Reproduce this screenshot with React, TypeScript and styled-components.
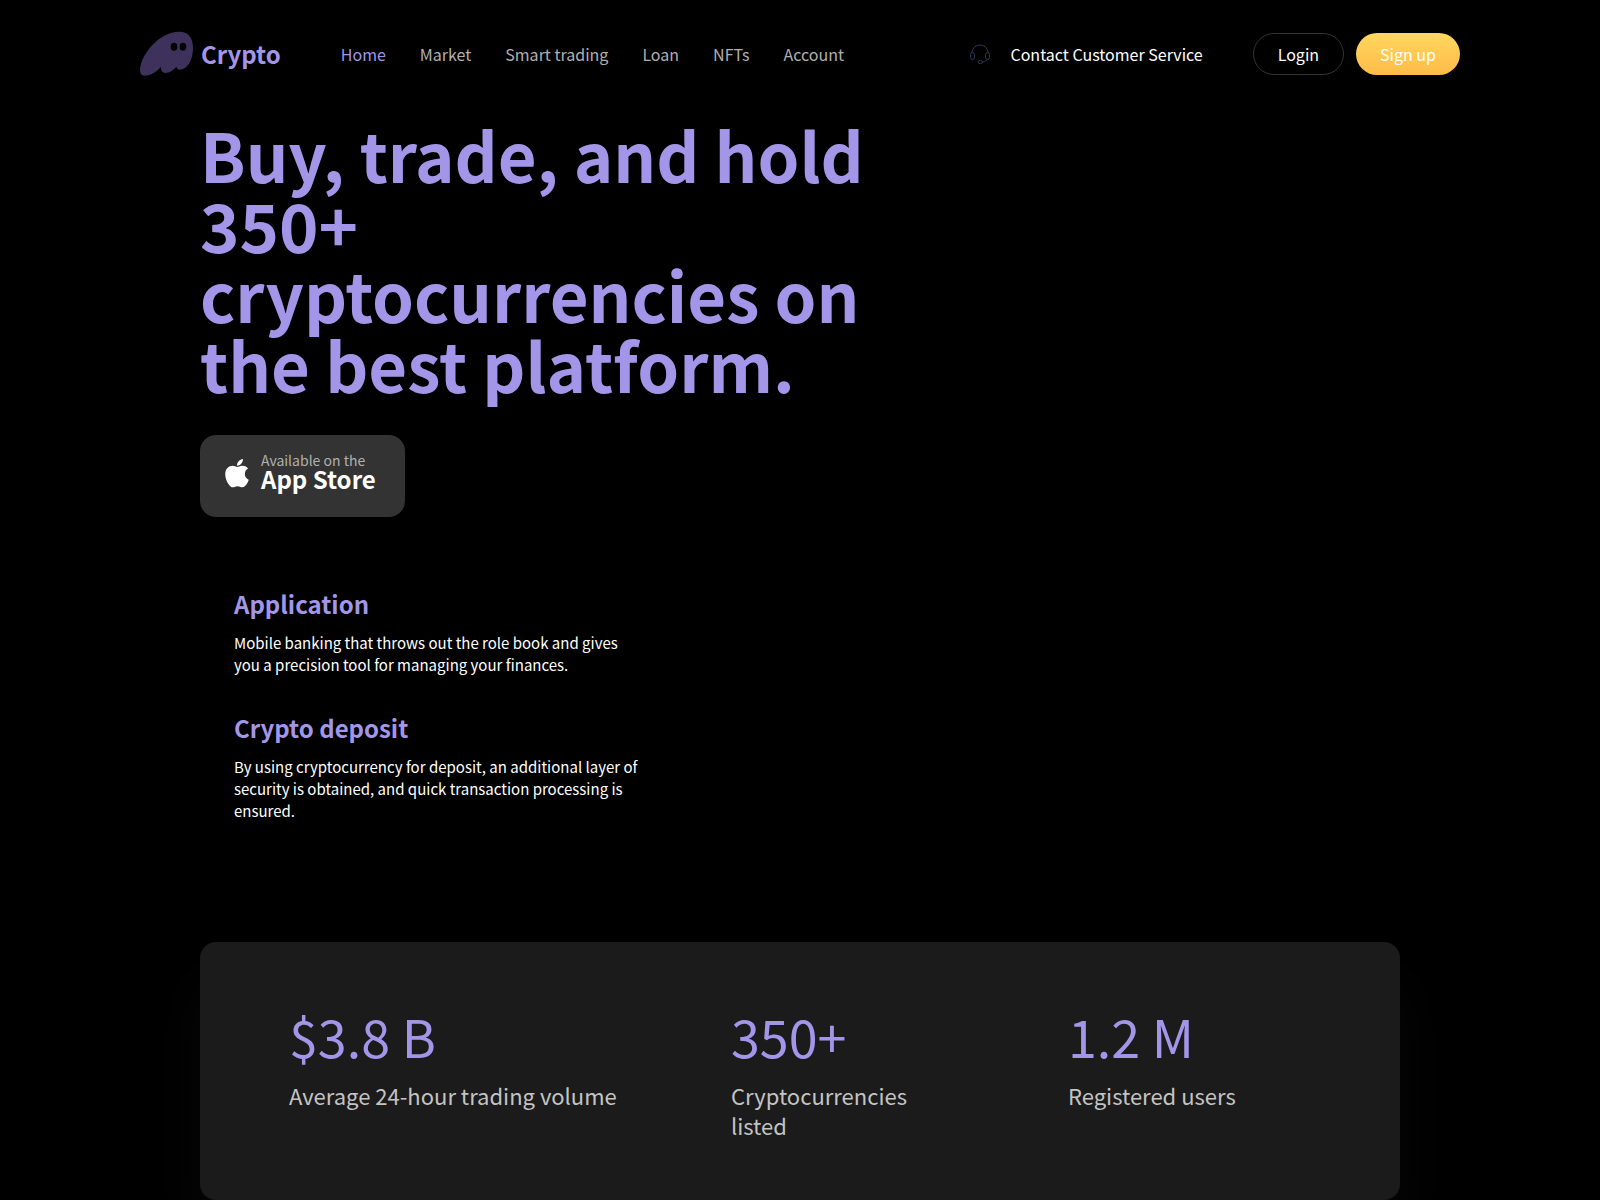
import React from "react";
import styled, { createGlobalStyle } from "styled-components";

const violet = "#a396e8";

const GlobalStyle = createGlobalStyle`
  *, *::before, *::after { box-sizing: border-box; }
  body {
    margin: 0;
    background: #000;
    color: #fff;
    font-family: "Noto Sans CJK SC", "Noto Sans CJK JP", sans-serif;
    font-size: 16px;
    line-height: 22px;
    overflow-x: hidden;
  }
  h1, h2, p, dl, dd, ul { margin: 0; padding: 0; }
  a { color: inherit; text-decoration: none; }
`;

const Header = styled.header`
  display: flex;
  align-items: center;
  max-width: 1320px;
  height: 108px;
  margin: 0 auto;
`;

const Brand = styled.a`
  display: flex;
  align-items: center;
  gap: 7px;
  color: ${violet};
  font-size: 24px;
  font-weight: 700;
`;

const NavList = styled.ul`
  display: flex;
  gap: 34px;
  margin-left: 60px;
  list-style: none;
`;

const NavLink = styled.a<{ $active?: boolean }>`
  color: ${(p) => (p.$active ? violet : "#b0b0b0")};
`;

const Actions = styled.div`
  display: flex;
  align-items: center;
  gap: 12px;
  margin-left: auto;
`;

const Contact = styled.a`
  display: flex;
  align-items: center;
  gap: 19px;
  margin-right: 38px;
`;

const PillButton = styled.button<{ $primary?: boolean }>`
  height: 42px;
  padding: 0 24px;
  border: ${(p) => (p.$primary ? "0" : "1px solid #333")};
  border-radius: 21px;
  background: ${(p) => (p.$primary ? "linear-gradient(#ffd75e, #ffbb48)" : "transparent")};
  color: #fff;
  font: inherit;
  cursor: pointer;
`;

const Main = styled.main`
  max-width: 1200px;
  margin: 0 auto;
`;

const Headline = styled.h1`
  max-width: 700px;
  padding-top: 11px;
  color: ${violet};
  font-size: 67px;
  font-weight: 700;
  line-height: 70px;
`;

const StoreLink = styled.a`
  display: inline-flex;
  align-items: center;
  gap: 12px;
  height: 82px;
  margin-top: 36px;
  padding: 0 29px 6px 25px;
  border-radius: 16px;
  background: #333;
`;

const StoreText = styled.span`
  display: flex;
  flex-direction: column;
  padding-bottom: 6px;
`;

const StoreHint = styled.span`
  color: #b0b0b0;
  font-size: 14px;
  line-height: 18px;
`;

const StoreName = styled.span`
  font-size: 24px;
  font-weight: 700;
  line-height: 20px;
`;

const Features = styled.section`
  display: flex;
  flex-direction: column;
  gap: 34px;
  max-width: 480px;
  padding: 69px 34px 0;
`;

const FeatureTitle = styled.h2`
  margin-bottom: 10px;
  color: ${violet};
  font-size: 24px;
  font-weight: 700;
  line-height: 36px;
`;

const FeatureText = styled.p`
  font-size: 15px;
`;

const Stats = styled.dl`
  display: grid;
  grid-template-columns: 442fr 337fr 243fr;
  margin-top: 120px;
  padding: 56px 89px 60px;
  border-radius: 16px;
  background: #1b1b1b;
  box-shadow: 0 40px 60px rgba(255, 255, 255, 0.03);
`;

const Stat = styled.div`
  display: flex;
  flex-direction: column-reverse;
  justify-content: flex-end;
`;

const StatLabel = styled.dt<{ $narrow?: boolean }>`
  max-width: ${(p) => (p.$narrow ? "200px" : "none")};
  color: #c4c4c4;
  font-size: 22px;
  line-height: 30px;
`;

const StatValue = styled.dd`
  margin-bottom: 6px;
  color: ${violet};
  font-size: 52px;
  line-height: 76px;
`;

const GhostLogo = () => (
  <svg width="54" height="46" viewBox="60 64 162 138" aria-hidden="true">
    <path
      fill="#3e325c"
      d="M61 188C53 148 112 66 178 66C206 66 219 85 219 115C219 150 204 178 180 180C174 180 171 177 169 172C160 181 148 190 136 190C126 189 122 184 123 172C108 187 92 198 75 198C66 198 62 195 61 188Z"
    />
    <ellipse cx="162" cy="111" rx="10" ry="12" />
    <ellipse cx="189" cy="111" rx="10" ry="12" />
  </svg>
);

const HeadsetIcon = () => (
  <svg width="22" height="22" viewBox="0 0 22 22" fill="none" stroke="#2b3852" aria-hidden="true">
    <path d="M3 9.500A8 7.500 0 0 1 19 9.500" />
    <rect x="1.500" y="9.500" width="4" height="7" rx="2" />
    <rect x="16.500" y="9.500" width="4" height="7" rx="2" />
    <path d="M18.500 16.500C18 17.500 16 18.500 13.500 18.800" />
    <ellipse cx="11.300" cy="19" rx="2.300" ry="1.600" />
  </svg>
);

const AppleIcon = () => (
  <svg width="24" height="29" viewBox="0 32 384 458" preserveAspectRatio="none" fill="#fff" aria-hidden="true">
    <path d="M318.700 268.700c-.2-36.700 16.400-64.400 50-84.800-18.800-26.900-47.200-41.700-84.700-44.600-35.500-2.800-74.300 20.700-88.500 20.700-15 0-49.400-19.700-76.400-19.700C63.300 141.200 4 184.800 4 273.500q0 39.300 14.400 81.200c12.800 36.700 59 126.700 107.200 125.200 25.200-.6 43-17.900 75.800-17.900 31.800 0 48.300 17.900 76.400 17.900 48.600-.7 90.400-82.500 102.600-119.300-65.200-30.700-61.700-90-61.700-91.900zm-56.600-164.200c27.300-32.400 24.800-61.900 24-72.500-24.100 1.400-52 16.400-67.900 34.900-17.500 19.800-27.800 44.300-25.600 71.900 26.100 2 49.900-11.400 69.500-34.300z" />
  </svg>
);

const navItems = ["Home", "Market", "Smart trading", "Loan", "NFTs", "Account"];

const features = [
  {
    title: "Application",
    text: "Mobile banking that throws out the role book and gives you a precision tool for managing your finances.",
  },
  {
    title: "Crypto deposit",
    text: "By using cryptocurrency for deposit, an additional layer of security is obtained, and quick transaction processing is ensured.",
  },
];

const stats = [
  { value: "$3.8 B", label: "Average 24-hour trading volume" },
  { value: "350+", label: "Cryptocurrencies listed", narrow: true },
  { value: "1.2 M", label: "Registered users" },
];

export default function App() {
  return (
    <>
      <GlobalStyle />
      <Header>
        <Brand href="#">
          <GhostLogo />
          Crypto
        </Brand>
        <nav>
          <NavList>
            {navItems.map((item, i) => (
              <li key={item}>
                <NavLink href="#" $active={i === 0}>
                  {item}
                </NavLink>
              </li>
            ))}
          </NavList>
        </nav>
        <Actions>
          <Contact href="#">
            <HeadsetIcon />
            Contact Customer Service
          </Contact>
          <PillButton type="button">Login</PillButton>
          <PillButton type="button" $primary>
            Sign up
          </PillButton>
        </Actions>
      </Header>
      <Main>
        <Headline>Buy, trade, and hold 350+ cryptocurrencies on the best platform.</Headline>
        <StoreLink href="#">
          <AppleIcon />
          <StoreText>
            <StoreHint>Available on the</StoreHint>
            <StoreName>App Store</StoreName>
          </StoreText>
        </StoreLink>
        <Features>
          {features.map((f) => (
            <article key={f.title}>
              <FeatureTitle>{f.title}</FeatureTitle>
              <FeatureText>{f.text}</FeatureText>
            </article>
          ))}
        </Features>
        <Stats>
          {stats.map((s) => (
            <Stat key={s.label}>
              <StatLabel $narrow={s.narrow}>{s.label}</StatLabel>
              <StatValue>{s.value}</StatValue>
            </Stat>
          ))}
        </Stats>
      </Main>
    </>
  );
}
